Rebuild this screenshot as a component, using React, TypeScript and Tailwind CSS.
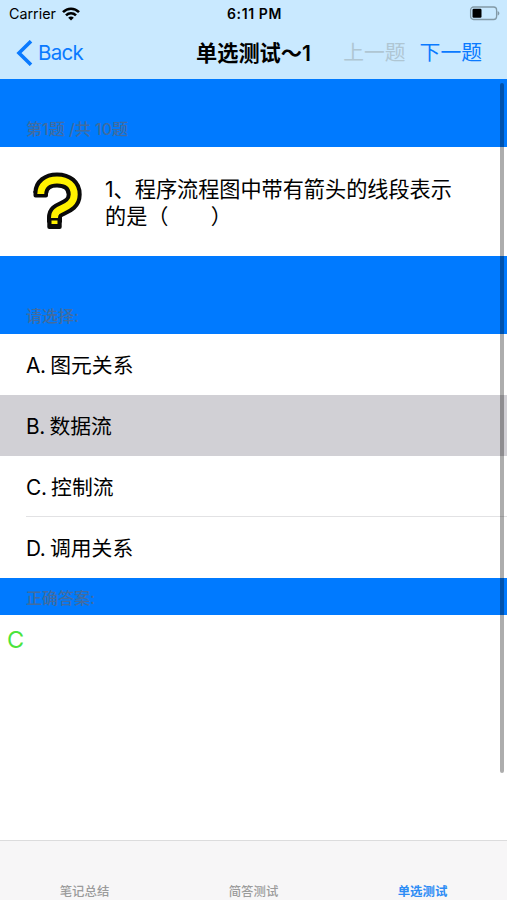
import type {ReactNode} from 'react';
import clsx from 'clsx';

const OPTIONS = [
  {id: 'A', text: '图元关系'},
  {id: 'B', text: '数据流'},
  {id: 'C', text: '控制流'},
  {id: 'D', text: '调用关系'},
];

const TABS = ['笔记总结', '简答测试', '单选测试'];

export default function App() {
  return (
    <div className="relative flex h-[900px] w-[507px] flex-col overflow-hidden bg-white font-['Inter','Noto_Sans_CJK_SC',sans-serif] text-black">
      <header className="h-[79px] shrink-0 bg-[#c9e9ff]">
        <StatusBar />
        <NavBar />
      </header>
      <main className="flex-1">
        <SectionHeader className="h-[68px] pb-[9px]">第1题 /共 10题</SectionHeader>
        <Question />
        <SectionHeader className="h-[78px] pb-[9px]">请选择:</SectionHeader>
        <OptionList selected="B" />
        <SectionHeader className="h-[37px] pb-[8px]">正确答案:</SectionHeader>
        <p className="pt-[10px] pl-[7px] text-[23.5px] leading-[30px] text-[#4be43c]">C</p>
      </main>
      <TabBar active={2} />
      <div className="absolute top-[83px] right-[3px] h-[690px] w-[4px] rounded-full bg-black/32" />
    </div>
  );
}

function StatusBar() {
  return (
    <div className="grid h-[27px] grid-cols-3 items-center pr-[7px] pl-[9px]">
      <div className="flex items-center gap-[6px]">
        <span className="text-[14.3px]">Carrier</span>
        <svg width="18" height="14" viewBox="0 0 18 14" fill="none" stroke="#000" strokeWidth="2.6">
          <path d="M1 5.2C5.5.6 12.5.6 17 5.2" />
          <path d="M4 8.4C6.8 5.6 11.2 5.6 14 8.4" />
          <path d="M9 13.6 6.2 10.7C7.8 9.2 10.2 9.2 11.8 10.7Z" fill="#000" stroke="none" />
        </svg>
      </div>
      <span className="text-center text-[14px] leading-[27px] font-semibold tracking-[0.6px]">6:11 PM</span>
      <svg className="justify-self-end" width="31" height="15" viewBox="0 0 31 15">
        <rect x="1.600" y="1" width="26" height="12.500" rx="3" fill="none" stroke="#8299a6" strokeWidth="1.3" />
        <rect x="3.500" y="2.800" width="9" height="9" rx="1.2" fill="#000" />
        <path d="M28.600 5C31 6 31 8.600 28.600 9.600Z" fill="#8299a6" />
      </svg>
    </div>
  );
}

function NavBar() {
  return (
    <nav className="relative flex h-[52px] items-center pr-[25px] pl-[16px] text-[20.8px] leading-[52px]">
      <button className="flex items-center gap-[5px] text-[#0a7aff]">
        <svg width="17" height="26" viewBox="0 0 17 26" fill="none" stroke="currentColor" strokeWidth="3.6">
          <path d="M15 1.2 3 13 15 24.8" />
        </svg>
        <span className="text-[20.5px] tracking-[-0.7px]">Back</span>
      </button>
      <h1 className="absolute left-[196px] text-[21.2px] font-semibold whitespace-nowrap">
        单选测试～1
      </h1>
      <div className="ml-auto flex gap-[14px]">
        <button className="text-[#afc6d3]">上一题</button>
        <button className="text-[#0a7aff]">下一题</button>
      </div>
    </nav>
  );
}

function SectionHeader({className, children}: {className: string; children: ReactNode}) {
  return (
    <div className={clsx('flex items-end bg-[#007aff] pl-[26px]', className)}>
      <h2 className="text-[16px] leading-[18px] font-medium text-[#426ca0]">{children}</h2>
    </div>
  );
}

function Question() {
  return (
    <section className="flex h-[109px] items-center pl-[25px]">
      <QuestionMark />
      <p className="ml-[15px] w-[360px] pt-[2px] text-[21.15px] leading-[27px]">
        1、程序流程图中带有箭头的线段表示
        <br />
        的是（　　）
      </p>
    </section>
  );
}

function QuestionMark() {
  return (
    <svg className="mt-[2px]" width="65" height="75" viewBox="0 0 65 75" fill="none" strokeLinejoin="round">
      <path
        d="M15.800 28C16 20 22.500 15 32 15C42.500 15 49.200 20.500 49.200 29.500C49.200 41 37 42.500 32 46.500C30 48.200 29.500 50 29.500 53V57.500"
        stroke="#0a0a0a"
        strokeWidth="15"
      />
      <path d="M10.500 26V30.500H21V26M24.300 51V62H34.700V51Z" fill="#0a0a0a" stroke="#0a0a0a" strokeWidth="4" />
      <path
        d="M15.800 29C16 20 22.500 15 32 15C42.500 15 49.200 20.500 49.200 29.500C49.200 41 37 42.500 32 46.500C30 48.200 29.500 50 29.500 53"
        stroke="#fff100"
        strokeWidth="7"
      />
      <path d="M26.500 55.500H32.500V59H26.500Z" fill="#fff100" />
    </svg>
  );
}

function OptionList({selected}: {selected: string}) {
  return (
    <ul>
      {OPTIONS.map((option) => (
        <li
          key={option.id}
          className={clsx('h-[61px] pl-[26px]', option.id === selected && 'bg-[#d1d0d5]')}
        >
          <div
            className={clsx(
              'flex h-full items-center text-[20.8px]',
              option.id === 'C' ? 'border-b border-[#e2e2e4] pt-[3px]' : 'pt-[2px]',
            )}
          >
            <span className="mr-[4.500px] tracking-[-0.3px]">{option.id}.</span>
            {option.text}
          </div>
        </li>
      ))}
    </ul>
  );
}

function TabBar({active}: {active: number}) {
  return (
    <footer className="grid h-[60px] shrink-0 grid-cols-3 items-end border-t border-[#dcdcdd] bg-[#f7f6f7]">
      {TABS.map((tab, index) => (
        <button
          key={tab}
          className={clsx(
            'text-center text-[12.4px] leading-[16px]',
            index === active ? 'font-bold text-[#2d8cf5]' : 'font-medium text-[#9b9b9b]',
          )}
        >
          {tab}
        </button>
      ))}
    </footer>
  );
}
